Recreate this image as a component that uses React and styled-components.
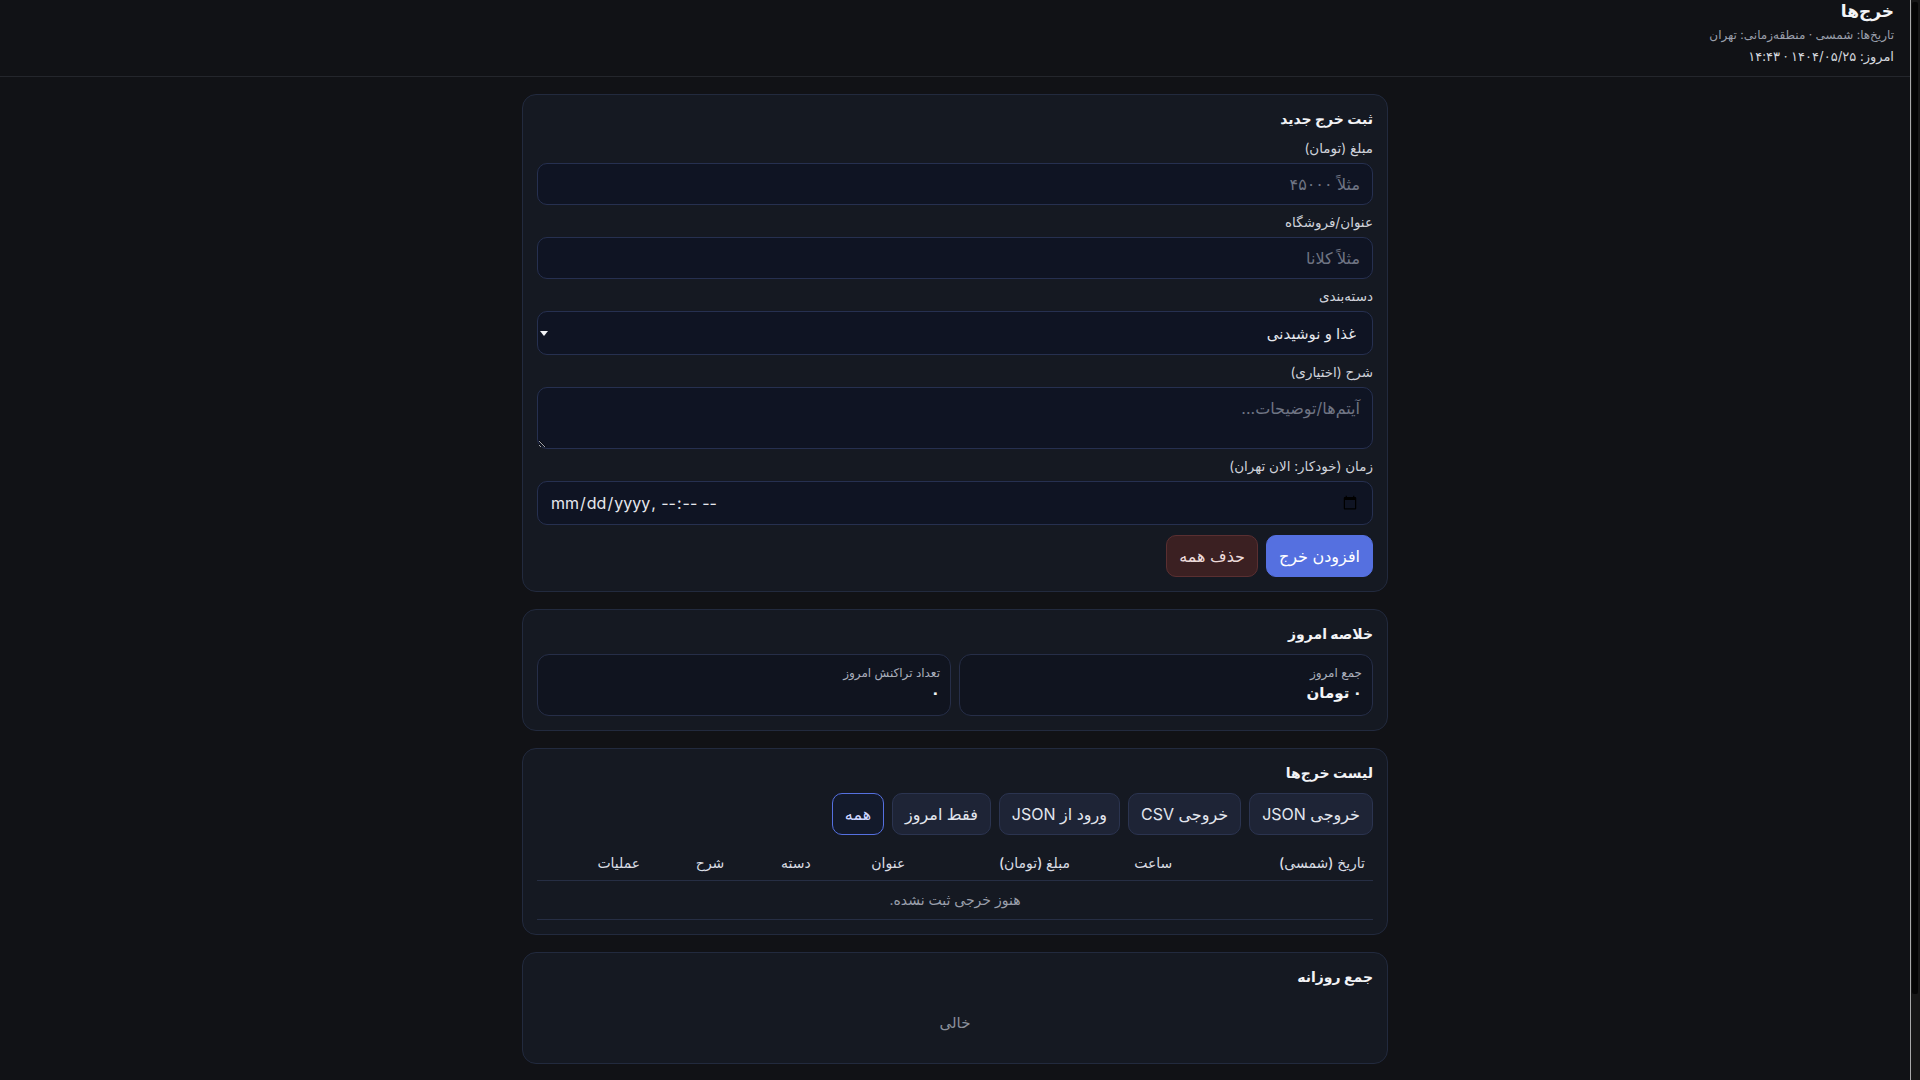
import React from 'react';
import styled, {createGlobalStyle, css} from 'styled-components';

const GlobalStyle = createGlobalStyle`
  html, body {
    margin: 0;
    padding: 0;
    background: #111216;
  }

  body {
    font-family: Inter, "DejaVu Sans", sans-serif;
    color: #e6e8ee;
  }

  * {
    box-sizing: border-box;
  }
`

// page + the window scrollbar strip on the right, as in the app screenshot
const Shell = styled.div`
  display: flex;
  height: 100vh;
  overflow: hidden;
`

const Page = styled.div`
  flex: 1;
  min-width: 0;
  direction: rtl;
`

const ScrollBar = styled.div`
  width: 10px;
  flex-shrink: 0;
  background: #161616;
  border-left: 1px solid #a8a8a8;
  padding: 2px 2px 0 1px;
`

const ScrollThumb = styled.div`
  height: 92%;
  background: #050505;
  border-radius: 2px;
`

const Header = styled.header`
  padding: 0 16px 11px;
  border-bottom: 1px solid #24262c;
`

const Title = styled.h1`
  margin: 0;
  font-size: 17px;
  line-height: 22px;
  font-weight: 700;
  color: #f3f4f7;
`

const Meta = styled.div`
  margin-top: ${props => props.top || '4px'};
  font-size: ${props => props.light ? '13px' : '12px'};
  line-height: 18px;
  color: ${props => props.light ? '#d4d7de' : '#9a9fab'};
`

const Main = styled.main`
  max-width: 866px;
  margin: 0 auto;
  padding: 17px 0 100px;
  display: flex;
  flex-direction: column;
  gap: 17px;
`

const Card = styled.section`
  background: #151922;
  border: 1px solid #222a3e;
  border-radius: 14px;
  padding: 14px;
`

const CardTitle = styled.h2`
  margin: 0 0 10px;
  font-size: 14px;
  line-height: 20px;
  font-weight: 700;
  color: #f2f3f6;
`

const Field = styled.div`
  margin-bottom: 8px;
`

const Label = styled.label`
  display: block;
  margin-bottom: 6px;
  font-size: 13.5px;
  line-height: 18px;
  color: #cfd2da;
`

const fieldBase = css`
  display: block;
  width: 100%;
  background: #0f1423;
  border: 1px solid #263050;
  border-radius: 10px;
  color: #e6e8ee;
  font-family: Inter, "DejaVu Sans", sans-serif;
  font-size: 16px;
  outline: none;

  &::placeholder {
    color: #6f7584;
  }
`

const TextInput = styled.input`
  ${fieldBase};
  height: ${props => props.tall ? '44px' : '42px'};
  padding: 0 12px;
`

const SelectWrap = styled.div`
  position: relative;

  &::after {
    content: '';
    position: absolute;
    left: 3px;
    top: 50%;
    margin-top: -2px;
    border-left: 4.5px solid transparent;
    border-right: 4.5px solid transparent;
    border-top: 5px solid #f2f3f6;
    pointer-events: none;
  }
`

const Select = styled.select`
  ${fieldBase};
  appearance: none;
  height: 44px;
  padding: 0 16px;
  font-size: 15px;
`

const TextArea = styled.textarea`
  ${fieldBase};
  height: 62px;
  padding: 10px 12px;
  resize: vertical;
`

const ButtonRow = styled.div`
  display: flex;
  flex-wrap: wrap;
  gap: 8px;
  margin-top: ${props => props.top || '0'};
`

const Button = styled.button`
  height: 42px;
  padding: 0 12px;
  border-radius: 10px;
  border: 1px solid #2b3450;
  background: #1e2436;
  color: #e3e6ee;
  font-family: Inter, "DejaVu Sans", sans-serif;
  font-size: 16px;
  cursor: pointer;

  ${props => props.variant === 'primary' && css`
    background: #5570e0;
    border-color: #5570e0;
    color: #ffffff;
  `}

  ${props => props.variant === 'danger' && css`
    background: #3b2022;
    border-color: #5a2f31;
    color: #ecdada;
  `}

  ${props => props.active && css`
    background: #131a2b;
    border-color: #5570e0;
    color: #cdd6ff;
  `}
`

const StatGrid = styled.div`
  display: grid;
  grid-template-columns: 1fr 1fr;
  gap: 8px;
`

const StatBox = styled.div`
  background: #10141f;
  border: 1px solid #262e48;
  border-radius: 12px;
  padding: 10px 10px;
`

const StatLabel = styled.div`
  font-size: 12px;
  line-height: 16px;
  color: #a9aebb;
`

const StatValue = styled.div`
  font-size: 15px;
  line-height: 24px;
  font-weight: 700;
  color: #f3f4f7;
`

const Table = styled.table`
  width: 100%;
  margin-top: 11px;
  border-collapse: collapse;
`

const Th = styled.th`
  padding: 8px;
  text-align: right;
  font-size: 14px;
  line-height: 18px;
  font-weight: 500;
  color: #dadde4;
  border-bottom: 1px solid #262e44;
`

const EmptyCell = styled.td`
  padding: 10px 8px;
  text-align: center;
  font-size: 14px;
  line-height: 18px;
  color: #9a9fab;
  border-bottom: 1px solid #262e44;
`

const EmptyNote = styled.div`
  padding: 16px 0;
  text-align: center;
  font-size: 15px;
  line-height: 20px;
  color: #8b909c;
`

const columns = ['تاریخ (شمسی)', 'ساعت', 'مبلغ (تومان)', 'عنوان', 'دسته', 'شرح', 'عملیات']

const listActions = [
    {label: 'خروجی JSON'},
    {label: 'خروجی CSV'},
    {label: 'ورود از JSON'},
    {label: 'فقط امروز'},
    {label: 'همه', active: true},
]

const App = () => {
    return (
        <Shell>
            <GlobalStyle/>
            <Page dir="rtl">
                <Header>
                    <Title>خرج‌ها</Title>
                    <Meta>تاریخ‌ها: شمسی · منطقه‌زمانی: تهران</Meta>
                    <Meta light top={'3px'}>امروز: ۱۴۰۴/۰۵/۲۵ · ۱۴:۴۳</Meta>
                </Header>

                <Main>
                    <Card>
                        <CardTitle>ثبت خرج جدید</CardTitle>
                        <Field>
                            <Label>مبلغ (تومان)</Label>
                            <TextInput placeholder="مثلاً ۴۵۰۰۰"/>
                        </Field>
                        <Field>
                            <Label>عنوان/فروشگاه</Label>
                            <TextInput placeholder="مثلاً کلانا"/>
                        </Field>
                        <Field>
                            <Label>دسته‌بندی</Label>
                            <SelectWrap>
                                <Select defaultValue="food">
                                    <option value="food">غذا و نوشیدنی</option>
                                    <option value="transport">حمل و نقل</option>
                                    <option value="other">سایر</option>
                                </Select>
                            </SelectWrap>
                        </Field>
                        <Field>
                            <Label>شرح (اختیاری)</Label>
                            <TextArea placeholder="آیتم‌ها/توضیحات..."/>
                        </Field>
                        <Field>
                            <Label>زمان (خودکار: الان تهران)</Label>
                            <TextInput tall type="datetime-local" dir="ltr"/>
                        </Field>
                        <ButtonRow top={'10px'}>
                            <Button variant="primary">افزودن خرج</Button>
                            <Button variant="danger">حذف همه</Button>
                        </ButtonRow>
                    </Card>

                    <Card>
                        <CardTitle>خلاصه امروز</CardTitle>
                        <StatGrid>
                            <StatBox>
                                <StatLabel>جمع امروز</StatLabel>
                                <StatValue>۰ تومان</StatValue>
                            </StatBox>
                            <StatBox>
                                <StatLabel>تعداد تراکنش امروز</StatLabel>
                                <StatValue>۰</StatValue>
                            </StatBox>
                        </StatGrid>
                    </Card>

                    <Card>
                        <CardTitle>لیست خرج‌ها</CardTitle>
                        <ButtonRow>
                            {listActions.map(a => (
                                <Button key={a.label} active={a.active}>{a.label}</Button>
                            ))}
                        </ButtonRow>
                        <Table>
                            <thead>
                            <tr>
                                {columns.map(c => <Th key={c}>{c}</Th>)}
                            </tr>
                            </thead>
                            <tbody>
                            <tr>
                                <EmptyCell colSpan={columns.length}>هنوز خرجی ثبت نشده.</EmptyCell>
                            </tr>
                            </tbody>
                        </Table>
                    </Card>

                    <Card>
                        <CardTitle>جمع روزانه</CardTitle>
                        <EmptyNote>خالی</EmptyNote>
                    </Card>
                </Main>
            </Page>
            <ScrollBar>
                <ScrollThumb/>
            </ScrollBar>
        </Shell>
    );
};

export default App;
